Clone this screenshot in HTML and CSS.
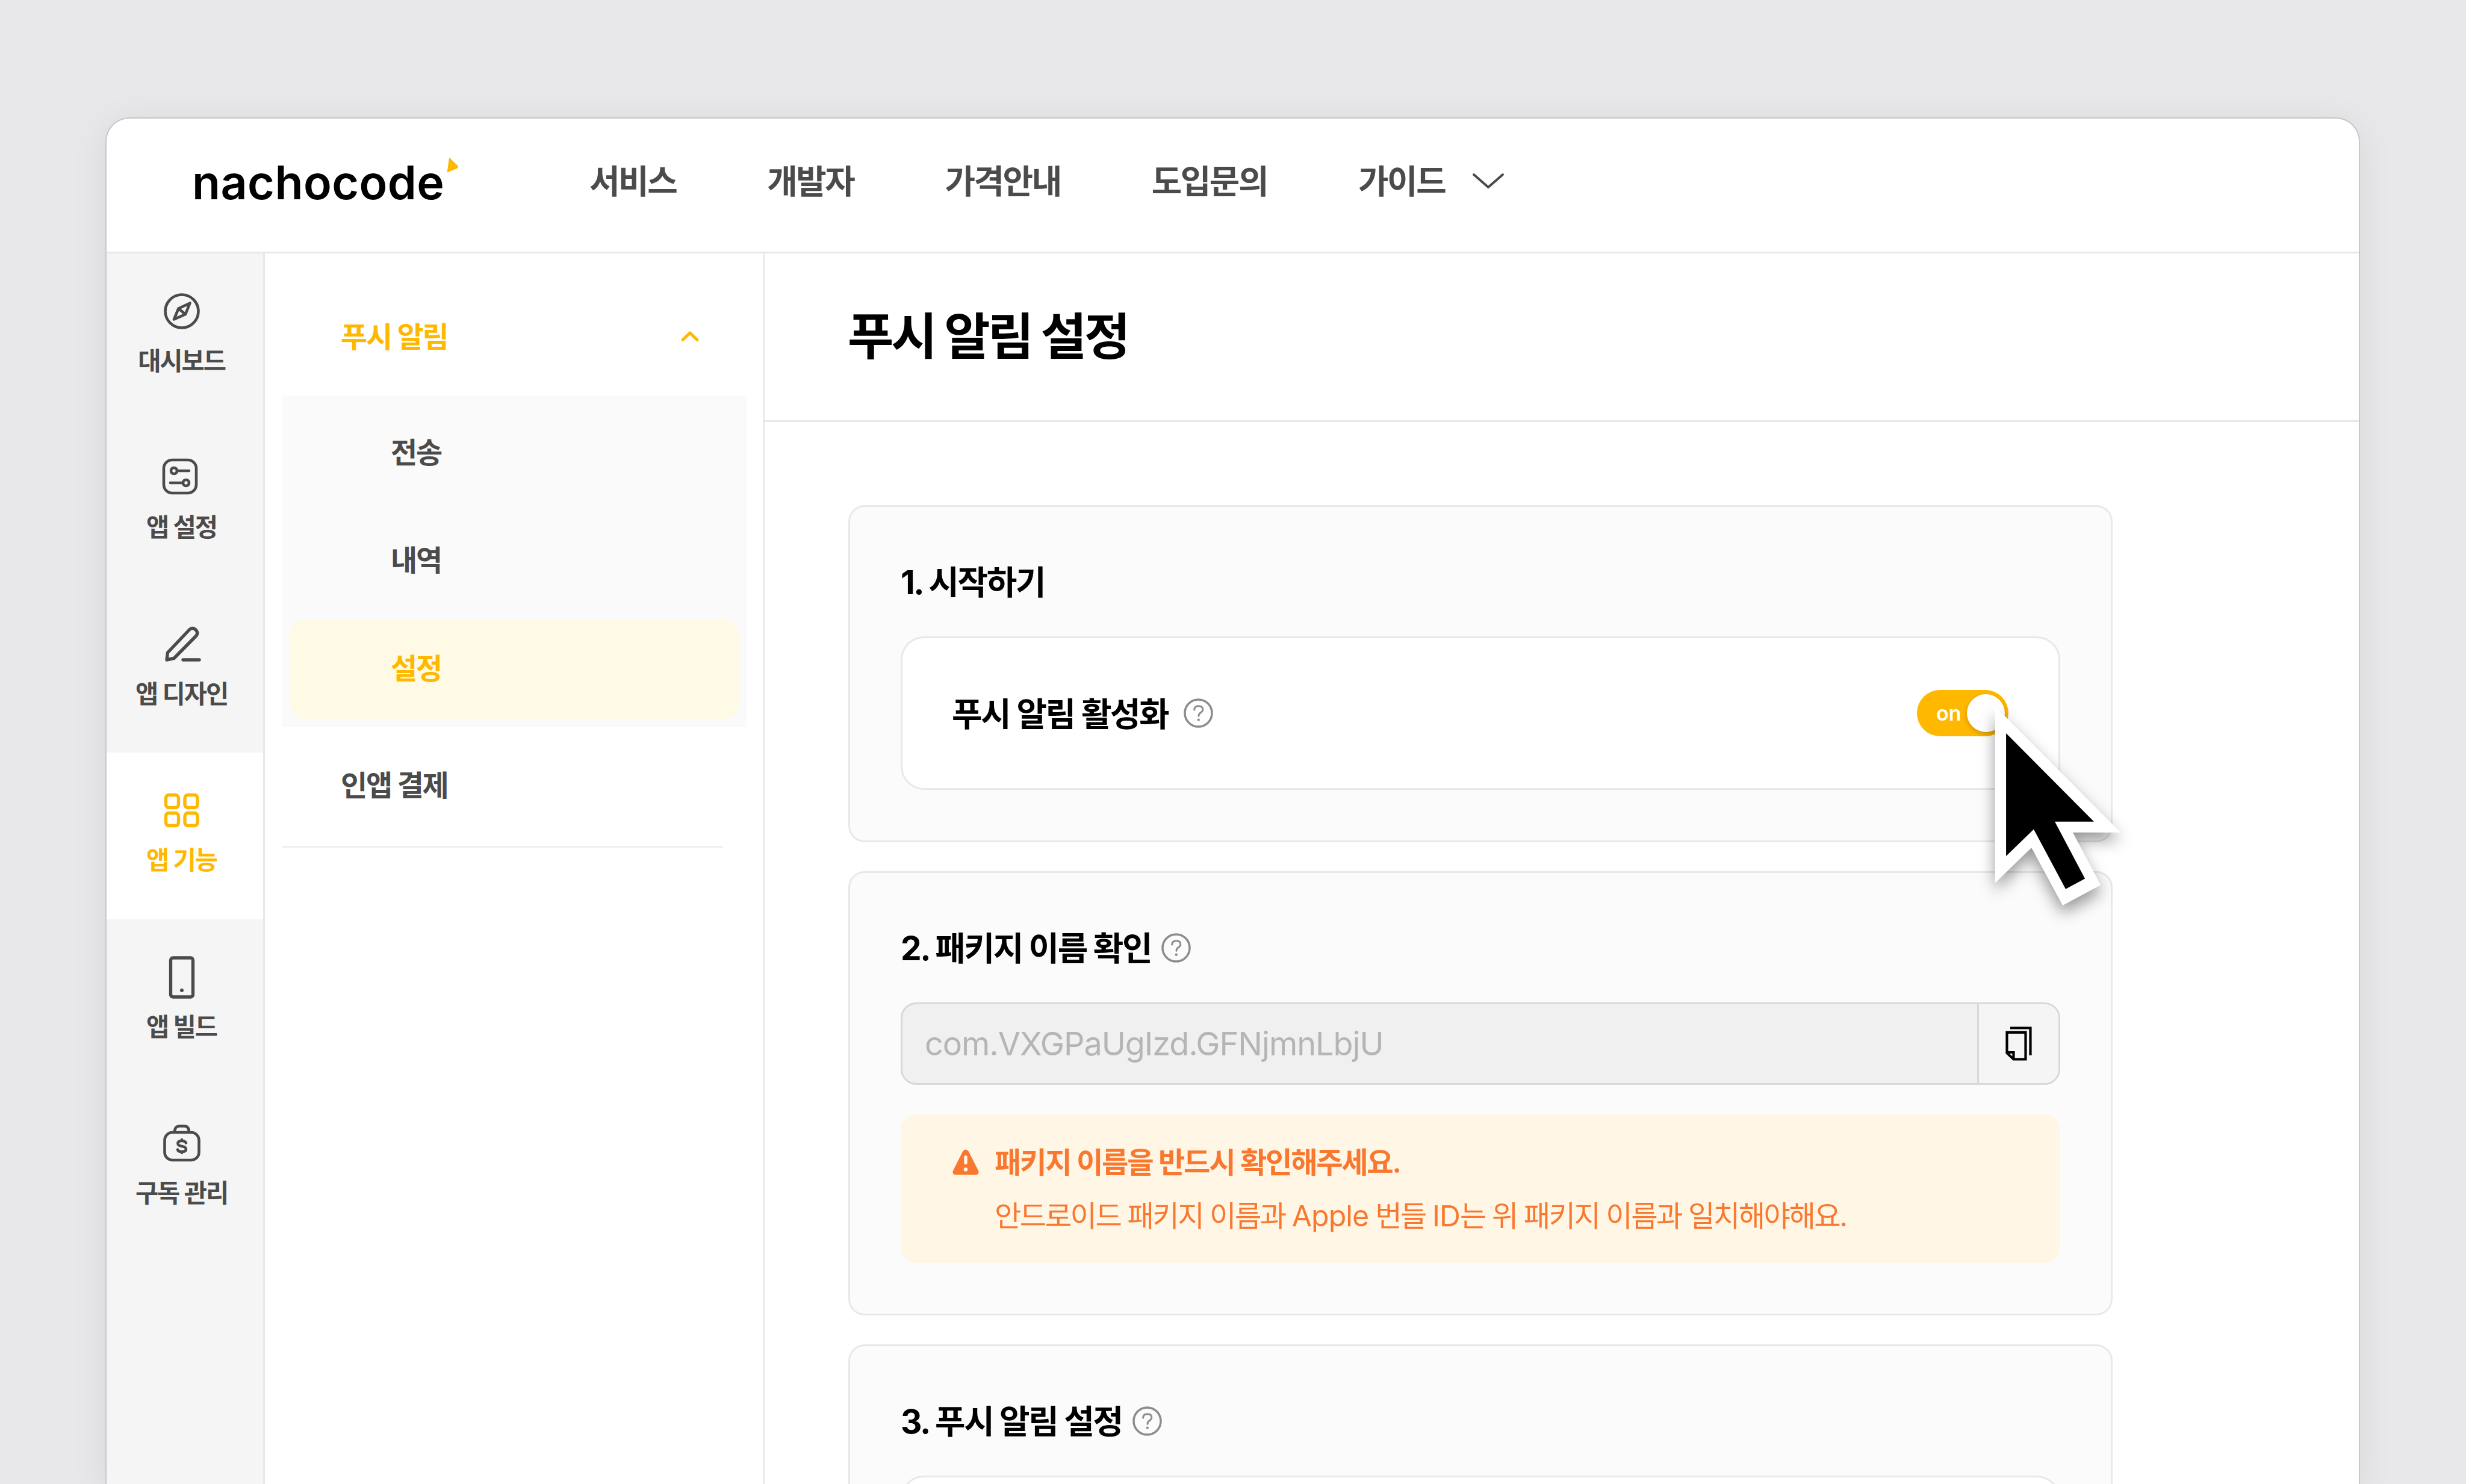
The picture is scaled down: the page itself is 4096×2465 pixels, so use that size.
FILE: index.html
```html
<!DOCTYPE html>
<html lang="ko">

<head>
    <meta charset="UTF-8">
    <meta name="viewport" content="width=device-width, initial-scale=1.0">
    <title>nachocode</title>

    <link rel="stylesheet" href="styles.css">
</head>

<body>
    <div class="window">
        <header class="header">
            <div class="logo">
                <span class="logo-text">nachocode</span>
                <svg class="logo-mark" width="20" height="26" viewBox="0 0 20 26"><path d="M4.2 0.6 L18.4 14.6 Q20 17 17.4 18.8 L0.6 25.4 Z" fill="#ffb800"/></svg>
            </div>
            <nav class="nav">
                <a>서비스</a>
                <a>개발자</a>
                <a>가격안내</a>
                <a>도입문의</a>
                <a>가이드</a>
            </nav>
            <svg class="nav-arrow" width="54" height="28" viewBox="0 0 54 28"><path d="M3 3 L27 24 L51 3" fill="none" stroke="#4b4b4b" stroke-width="4" stroke-linecap="round" stroke-linejoin="round"/></svg>
        </header>

        <div class="body">
            <aside class="sidebar">
                <div class="side-item">
                    <svg viewBox="0 0 64 64"><circle cx="32" cy="32" r="27.5"/><path d="M45.500 18.500 L38 37 L19 45.500 L26.500 27.500 Z M26.500 27.500 L38 37"/></svg>
                    <span>대시보드</span>
                </div>
                <div class="side-item">
                    <svg viewBox="0 0 64 64"><rect x="2" y="3" width="54" height="55" rx="14"/><circle cx="19" cy="21" r="5"/><path d="M24 21 H44 M13 41 H33"/><circle cx="39" cy="41" r="5"/></svg>
                    <span>앱 설정</span>
                </div>
                <div class="side-item">
                    <svg viewBox="0 0 64 64"><path class="thick" d="M7 58 L8.5 46 L45 7.5 Q50 3.5 55 8 Q60 13 56 18 L19 55.5 Z M34 58 H61"/></svg>
                    <span>앱 디자인</span>
                </div>
                <div class="side-item active">
                    <svg viewBox="0 0 64 64"><g class="thick"><rect x="5.5" y="6.5" width="21" height="21" rx="5"/><rect x="37" y="6.5" width="21" height="21" rx="5"/><rect x="5.5" y="36.5" width="21" height="21" rx="5"/><rect x="37" y="36.5" width="21" height="21" rx="5"/></g></svg>
                    <span>앱 기능</span>
                </div>
                <div class="side-item">
                    <svg viewBox="0 0 64 64"><rect class="thick" x="13.5" y="0" width="37" height="65" rx="4"/><circle class="dot" cx="32" cy="54" r="3"/></svg>
                    <span>앱 빌드</span>
                </div>
                <div class="side-item">
                    <svg viewBox="0 0 64 64"><rect x="3.500" y="14" width="57" height="46" rx="13"/><path d="M20 14 Q20 3.500 28 3.500 H36 Q44 3.500 44 14"/><path d="M39 31.500 Q37.500 28 32 28 Q25.500 28 25.500 32.500 Q25.500 36 32 37 Q39 38 39 42 Q39 46 32 46 Q26 46 25 42.500 M32 26 V28 M32 46 V48"/></svg>
                    <span>구독 관리</span>
                </div>
            </aside>

            <aside class="submenu">
                <div class="menu-title">
                    <span>푸시 알림</span>
                    <svg width="34" height="22" viewBox="0 0 34 22"><path d="M5 17.500 L17 6 L29 17.500" fill="none" stroke="#ffb800" stroke-width="5" stroke-linecap="round" stroke-linejoin="round"/></svg>
                </div>
                <ul class="menu-list">
                    <li>전송</li>
                    <li>내역</li>
                    <li class="selected">설정</li>
                </ul>
                <div class="menu-link">인앱 결제</div>
            </aside>

            <main class="main">
                <h1 class="page-title">푸시 알림 설정</h1>

                <div class="cards">
                    <section class="card">
                        <h2>1. 시작하기</h2>
                        <div class="box">
                            <span class="box-label">푸시 알림 활성화</span>
                            <svg class="help" viewBox="0 0 50 50"><circle cx="25" cy="25" r="23"/><path class="thin" d="M18 19.500 Q18.500 13 25 13 Q32.500 13 32.500 19 Q32.500 22 28.500 24.500 Q25.500 26.500 25.500 30"/><circle class="dot" cx="25.300" cy="36.500" r="2.200"/></svg>
                            <div class="toggle">
                                <span>on</span>
                                <i class="knob"></i>
                                <!-- mouse pointer -->
                                <svg class="cursor" width="210" height="332" viewBox="0 0 210 332">
                                    <path fill="#fff" d="M0.800 0 L209.400 209.800 H129.900 L176.200 297.100 L113.100 330.900 L61.300 235.100 L0.800 293.700 Z"/>
                                    <path fill="#000" d="M19.100 44.900 L165 191.700 H100 L150.100 286.600 L118 303.800 L65 204.600 L19.100 248.900 Z"/>
                                </svg>
                            </div>
                        </div>
                    </section>

                    <section class="card">
                        <h2>2. 패키지 이름 확인
                            <svg class="help" viewBox="0 0 50 50"><circle cx="25" cy="25" r="23"/><path class="thin" d="M18 19.500 Q18.500 13 25 13 Q32.500 13 32.500 19 Q32.500 22 28.500 24.500 Q25.500 26.500 25.500 30"/><circle class="dot" cx="25.300" cy="36.500" r="2.200"/></svg>
                        </h2>
                        <div class="package">
                            <div class="package-name">com.VXGPaUgIzd.GFNjmnLbjU</div>
                            <div class="copy">
                                <svg width="44" height="57" viewBox="0 0 44 57"><path d="M2.500 9.800 H33.500 V54.500 H13.500 L2.500 44 Z M2.500 43 H13.500 V54.500 M8 2.500 H41.500 V48" fill="none" stroke="#000" stroke-width="4.200"/></svg>
                            </div>
                        </div>
                        <div class="alert">
                            <svg width="44" height="43" viewBox="0 0 44 43"><path d="M22 0.500 Q25 0.500 26.800 3.500 L43 35.500 Q45 42.500 38 42.500 H6 Q-1 42.500 1 35.500 L17.200 3.500 Q19 0.500 22 0.500 Z" fill="#f97830"/><path d="M22 13 V22.500" stroke="#fff6e5" stroke-width="5.500" stroke-linecap="round"/><circle cx="22" cy="33.500" r="3.200" fill="#fff6e5"/></svg>
                            <div>
                                <p class="alert-title">패키지 이름을 반드시 확인해주세요.</p>
                                <p>안드로이드 패키지 이름과 <span class="latin">Apple</span> 번들 <span class="latin">ID</span>는 위 패키지 이름과 일치해야해요.</p>
                            </div>
                        </div>
                    </section>

                    <section class="card">
                        <h2>3. 푸시 알림 설정
                            <svg class="help" viewBox="0 0 50 50"><circle cx="25" cy="25" r="23"/><path class="thin" d="M18 19.500 Q18.500 13 25 13 Q32.500 13 32.500 19 Q32.500 22 28.500 24.500 Q25.500 26.500 25.500 30"/><circle class="dot" cx="25.300" cy="36.500" r="2.200"/></svg>
                        </h2>
                        <div class="box"></div>
                    </section>
                </div>
            </main>
        </div>
    </div>
</body>

</html>
```

FILE: styles.css
```css
* {
    box-sizing: border-box;
    margin: 0;
    padding: 0;
}

html {
    height: 2465px;
    overflow: hidden;
}

body {
    height: 2465px;
    overflow: hidden;
    padding: 195px 176px 0 175px;
    background-color: #e8e8ea;
    font-family: Inter, "Noto Sans CJK KR", sans-serif;
    color: #4b4b4b;
}

.window {
    height: 2270px;
    overflow: hidden;
    border: 2px solid #c8c8ca;
    border-bottom: none;
    border-radius: 40px 40px 0 0;
    background-color: #fff;
    box-shadow: 0 10px 60px rgba(0, 0, 0, 0.08);
}

.header {
    display: flex;
    align-items: center;
    height: 224px;
    padding: 0 0 14px 142px;
    border-bottom: 3px solid #e8e8e8;
}

.logo {
    display: flex;
    width: 660px;
    padding-top: 4px;
}

.logo-text {
    font-size: 77px;
    font-weight: 600;
    line-height: 94px;
    letter-spacing: 0.4px;
    color: #000;
}

.logo-mark {
    margin: 5px 0 0 4px;
}

.nav {
    display: flex;
    gap: 151px;
    font-size: 55px;
    font-weight: 600;
    line-height: 80px;
    letter-spacing: -0.046em;
}

.nav-arrow {
    margin-left: 45px;
}

.body {
    display: flex;
    height: 2044px;
}

.sidebar {
    width: 263px;
    border-right: 3px solid #e8e8e8;
    background-color: #f5f5f5;
}

.side-item {
    display: flex;
    flex-direction: column;
    align-items: center;
    height: 276.4px;
    padding: 64px 11px 0 0;
    font-size: 41.6px;
    font-weight: 600;
    line-height: 60px;
    letter-spacing: -0.05em;
}

.side-item svg {
    width: 64px;
    height: 64px;
    margin-bottom: 21px;
    overflow: visible;
    fill: none;
    stroke: currentColor;
    stroke-width: 4.6;
    stroke-linecap: round;
    stroke-linejoin: round;
}

.side-item .thick {
    stroke-width: 5.4;
}

.side-item .dot {
    fill: currentColor;
    stroke: none;
}

.active {
    background-color: #fff;
    color: #ffb800;
}

.submenu {
    width: 830px;
    padding: 0 27px 0 29px;
    border-right: 3px solid #e8e8e8;
    font-size: 48px;
    font-weight: 600;
    letter-spacing: -0.047em;
}

.menu-title {
    display: flex;
    align-items: center;
    justify-content: space-between;
    height: 236px;
    padding: 38px 77px 0 97px;
    color: #ffb800;
}

.menu-title span {
    margin-top: -4px;
}

.menu-list {
    display: flex;
    flex-direction: column;
    gap: 13px;
    padding: 13px;
    list-style: none;
    background-color: #fafafa;
}

.menu-list li {
    height: 166.4px;
    padding-left: 167px;
    border-radius: 26px;
    line-height: 164px;
}

.menu-list .selected {
    background-color: #fffae6;
    color: #ffb800;
}

.menu-link {
    height: 200px;
    margin-right: 39px;
    padding-left: 97px;
    border-bottom: 3px solid #eee;
    line-height: 193px;
}

.main {
    flex: 1;
    overflow: hidden;
}

.page-title {
    height: 280px;
    padding-left: 138px;
    border-bottom: 3px solid #e8e8e8;
    font-size: 83.2px;
    font-weight: 700;
    line-height: 276px;
    letter-spacing: -0.05em;
    color: #000;
}

.cards {
    display: flex;
    flex-direction: column;
    gap: 48px;
    width: 2239px;
    padding: 138px 0 0 139px;
}

.card {
    border: 3px solid #e8e8e8;
    border-radius: 27px;
    padding: 84px;
    background-color: #fbfbfb;
}

.card h2 {
    display: flex;
    align-items: center;
    height: 74px;
    margin-bottom: 57px;
    font-size: 55px;
    font-weight: 700;
    letter-spacing: -0.043em;
    color: #000;
}

.help {
    width: 49px;
    height: 49px;
    margin-left: 17px;
    fill: none;
    stroke: #8c8c8c;
    stroke-width: 3.6;
    stroke-linecap: round;
}

.help .thin {
    stroke-width: 3;
}

.help .dot {
    fill: #8c8c8c;
    stroke: none;
}

h2 .help {
    margin-top: 6px;
}

.box {
    display: flex;
    align-items: center;
    height: 255px;
    padding: 0 83px;
    border: 3px solid #e8e8e8;
    border-radius: 39px;
    background-color: #fff;
}

.box-label {
    margin: -5px 9px 0 -1px;
    font-size: 55px;
    font-weight: 600;
    letter-spacing: -0.046em;
    color: #000;
}

.toggle {
    position: relative;
    display: flex;
    align-items: center;
    justify-content: space-between;
    width: 152px;
    height: 77px;
    margin-left: auto;
    padding: 0 6px 0 32px;
    border-radius: 39px;
    background-color: #ffb800;
    font-size: 34px;
    font-weight: 600;
    color: #fff;
}

.knob {
    width: 63px;
    height: 63px;
    border-radius: 50%;
    background-color: #fff;
    box-shadow: 0 3px 8px rgba(0, 0, 0, 0.2);
}

.cursor {
    position: absolute;
    left: 129px;
    top: 27px;
    z-index: 2;
    overflow: visible;
    filter: drop-shadow(0 13px 13px rgba(0, 0, 0, 0.4));
}

.package {
    display: flex;
    height: 137px;
    overflow: hidden;
    border: 3px solid #d9d9d9;
    border-radius: 26px;
    background-color: #f0f0f0;
}

.package-name {
    flex: 1;
    padding-left: 37px;
    font-size: 54px;
    line-height: 131px;
    letter-spacing: -0.02em;
    color: #b5b5b5;
}

.copy {
    display: flex;
    align-items: center;
    justify-content: center;
    width: 135px;
    border-left: 3px solid #d9d9d9;
    background-color: #f5f5f5;
}

.alert {
    display: flex;
    gap: 26px;
    height: 247px;
    margin-top: 49px;
    padding: 35px 86px;
    border-radius: 26px;
    background-color: #fff6e5;
    font-size: 48.3px;
    line-height: 89px;
    letter-spacing: -0.053em;
    color: #f97830;
}

.alert svg {
    margin-top: 23px;
}

.alert-title {
    font-weight: 600;
    letter-spacing: -0.049em;
}

.latin {
    letter-spacing: -0.02em;
}
```
